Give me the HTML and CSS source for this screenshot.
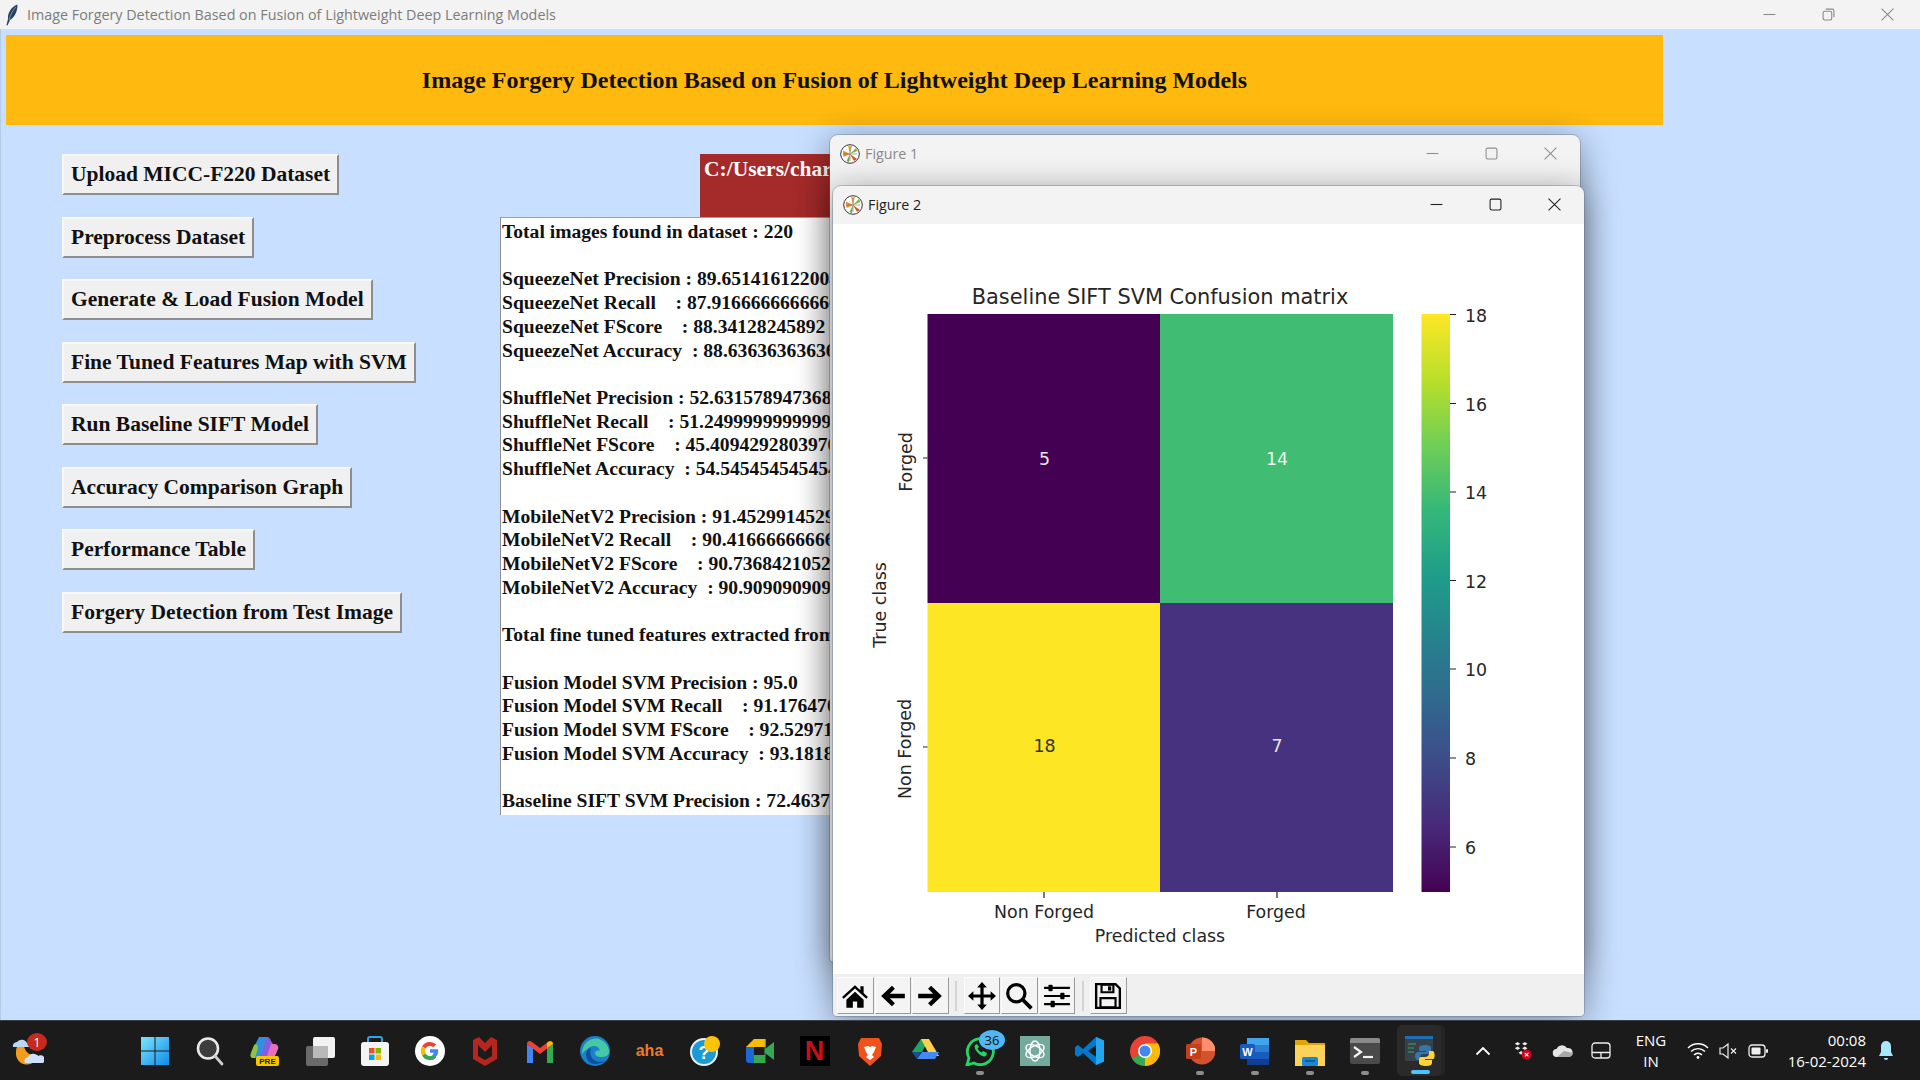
FILE: index.html
```html
<!DOCTYPE html>
<html lang="en">
<head>
  <meta charset="UTF-8" />
  <title>Image Forgery Detection Based on Fusion of Lightweight Deep Learning Models</title>
  <link rel="stylesheet" href="styles.css">
</head>
<body>

  <svg class="defs" width="0" height="0">
    <symbol id="ic-min" viewBox="0 0 12 12"><path d="M0.5 6h11" fill="none" stroke="currentColor"/></symbol>
    <symbol id="ic-max" viewBox="0 0 12 12"><rect x="1" y="1" width="10" height="10" rx="1.5" fill="none" stroke="currentColor"/></symbol>
    <symbol id="ic-restore" viewBox="0 0 12 12"><rect x="1" y="3" width="8" height="8" rx="1.5" fill="none" stroke="currentColor"/><path d="M3.5 1h6a1.5 1.5 0 0 1 1.5 1.5v6" fill="none" stroke="currentColor"/></symbol>
    <symbol id="ic-close" viewBox="0 0 12 12"><path d="M0.5 0.5l11 11M11.5 0.5l-11 11" fill="none" stroke="currentColor"/></symbol>
    <symbol id="ic-mpl" viewBox="0 0 20 20">
      <circle cx="10" cy="10" r="9.3" fill="#fff" stroke="#333" stroke-width="1"/>
      <path d="M10 10L3 6.5 3.5 13z" fill="#f08a24"/>
      <path d="M10 10L8 2 12 2z" fill="#e8b24a"/>
      <path d="M10 10L17 15 14 17z" fill="#d9541e"/>
      <path d="M10 10L16 4 17.5 7z" fill="#7fb54a"/>
      <path d="M10 10L9 18 6.5 17z" fill="#6aa84f"/>
      <path d="M3 10h14M10 3v14" stroke="#555" stroke-width=".5"/>
    </symbol>
  </svg>

  <div class="titlebar">
    <svg class="feather" width="14" height="22" viewBox="0 0 14 22"><path d="M12.5 0.5C6 3 2.5 9 3 15l-1.5 6 1 .5L5 16c5-3 7.500-9 7.500-15.500z" fill="#27405f"/><path d="M11 3C8 6 5.500 10 4 16" stroke="#9db4cc" stroke-width=".7" fill="none"/></svg>
    <span class="titlebar-text">Image Forgery Detection Based on Fusion of Lightweight Deep Learning Models</span>
    <div class="win-ctrls main-ctrls">
      <svg><use href="#ic-min"/></svg>
      <svg><use href="#ic-restore"/></svg>
      <svg><use href="#ic-close"/></svg>
    </div>
  </div>

  <div class="desktop">
    <div class="banner">Image Forgery Detection Based on Fusion of Lightweight Deep Learning Models</div>

    <div class="main">
      <div class="buttons">
        <button class="tk-btn">Upload MICC-F220 Dataset</button>
        <button class="tk-btn">Preprocess Dataset</button>
        <button class="tk-btn">Generate &amp; Load Fusion Model</button>
        <button class="tk-btn">Fine Tuned Features Map with SVM</button>
        <button class="tk-btn">Run Baseline SIFT Model</button>
        <button class="tk-btn">Accuracy Comparison Graph</button>
        <button class="tk-btn">Performance Table</button>
        <button class="tk-btn">Forgery Detection from Test Image</button>
      </div>
      <div class="output">
        <div class="path-label">C:/Users/charan</div>
<pre class="result-text">Total images found in dataset : 220

SqueezeNet Precision : 89.65141612200436
SqueezeNet Recall    : 87.91666666666667
SqueezeNet FScore    : 88.34128245892
SqueezeNet Accuracy  : 88.63636363636364

ShuffleNet Precision : 52.63157894736842
ShuffleNet Recall    : 51.24999999999999
ShuffleNet FScore    : 45.40942928039702
ShuffleNet Accuracy  : 54.54545454545454

MobileNetV2 Precision : 91.45299145299145
MobileNetV2 Recall    : 90.41666666666667
MobileNetV2 FScore    : 90.73684210526315
MobileNetV2 Accuracy  : 90.9090909090909

Total fine tuned features extracted from each model

Fusion Model SVM Precision : 95.0
Fusion Model SVM Recall    : 91.17647058823529
Fusion Model SVM FScore    : 92.52971137521221
Fusion Model SVM Accuracy  : 93.18181818181817

Baseline SIFT SVM Precision : 72.46376811594203</pre>
      </div>
    </div>

    <!-- matplotlib windows -->
    <div class="figure figure-back">
      <div class="fig-title inactive">
        <svg class="fig-logo"><use href="#ic-mpl"/></svg>
        <span>Figure 1</span>
        <div class="win-ctrls">
          <svg><use href="#ic-min"/></svg>
          <svg><use href="#ic-max"/></svg>
          <svg><use href="#ic-close"/></svg>
        </div>
      </div>
    </div>

    <div class="figure figure-front">
      <div class="fig-title">
        <svg class="fig-logo"><use href="#ic-mpl"/></svg>
        <span>Figure 2</span>
        <div class="win-ctrls">
          <svg><use href="#ic-min"/></svg>
          <svg><use href="#ic-max"/></svg>
          <svg><use href="#ic-close"/></svg>
        </div>
      </div>

      <svg class="chart" viewBox="833 224 751 750" width="751" height="750">
        <defs>
          <linearGradient id="viridis" x1="0" y1="1" x2="0" y2="0">
            <stop offset="0" stop-color="#440154"/>
            <stop offset=".11" stop-color="#482878"/>
            <stop offset=".22" stop-color="#3e4989"/>
            <stop offset=".33" stop-color="#31688e"/>
            <stop offset=".44" stop-color="#26828e"/>
            <stop offset=".55" stop-color="#1f9e89"/>
            <stop offset=".66" stop-color="#35b779"/>
            <stop offset=".77" stop-color="#6ece58"/>
            <stop offset=".88" stop-color="#b5de2b"/>
            <stop offset="1" stop-color="#fde725"/>
          </linearGradient>
        </defs>

        <text class="c-title" x="1160" y="304" text-anchor="middle">Baseline SIFT SVM Confusion matrix</text>

        <rect x="927.500" y="314" width="232.500" height="289" fill="#440154"/>
        <rect x="1160" y="314" width="233" height="289" fill="#40bd72"/>
        <rect x="927.500" y="603" width="232.500" height="289" fill="#fde725"/>
        <rect x="1160" y="603" width="233" height="289" fill="#46327e"/>

        <text class="c-ann" x="1044.500" y="464.500" text-anchor="middle" fill="#e6e6e6">5</text>
        <text class="c-ann" x="1277" y="464.500" text-anchor="middle" fill="#f0f0f0">14</text>
        <text class="c-ann" x="1044.500" y="752" text-anchor="middle" fill="#333">18</text>
        <text class="c-ann" x="1277" y="752" text-anchor="middle" fill="#e6e6e6">7</text>

        <path d="M923 458h4.500M923 747h4.500M1044 892v6M1277 892v6" stroke="#222" stroke-width="1.200"/>

        <text class="c-label" transform="translate(912 462) rotate(-90)" text-anchor="middle">Forged</text>
        <text class="c-label" transform="translate(911 749) rotate(-90)" text-anchor="middle">Non Forged</text>
        <text class="c-label" transform="translate(886 605) rotate(-90)" text-anchor="middle">True class</text>

        <text class="c-label" x="1044" y="918" text-anchor="middle">Non Forged</text>
        <text class="c-label" x="1276" y="918" text-anchor="middle">Forged</text>
        <text class="c-label" x="1160" y="942" text-anchor="middle">Predicted class</text>

        <rect x="1421.500" y="314" width="28.500" height="578" fill="url(#viridis)"/>
        <path d="M1450 314.500h6M1450 403.500h6M1450 492h6M1450 580.500h6M1450 669h6M1450 758h6M1450 847h6" stroke="#222" stroke-width="1.200"/>
        <text class="c-label" x="1465" y="321.500">18</text>
        <text class="c-label" x="1465" y="410.500">16</text>
        <text class="c-label" x="1465" y="499">14</text>
        <text class="c-label" x="1465" y="588">12</text>
        <text class="c-label" x="1465" y="676">10</text>
        <text class="c-label" x="1465" y="765">8</text>
        <text class="c-label" x="1465" y="854">6</text>
      </svg>

      <div class="toolbar">
        <button class="tool"><svg viewBox="0 0 26 26"><path d="M13 3L1 14l1.500 1.500L13 6l10.500 9.500L25 14l-4-3.700V4h-3v3.600z"/><path d="M5 16.500L13 9l8 7.500V24h-6v-6h-4v6H5z"/></svg></button>
        <button class="tool"><svg viewBox="0 0 26 26"><path d="M12 3.500L2 13l10 9.500 2.800-2.800-4.700-4.700H24v-4H10.100l4.700-4.700z"/></svg></button>
        <button class="tool"><svg viewBox="0 0 26 26"><path d="M14 3.500L24 13l-10 9.500-2.800-2.800 4.700-4.700H2v-4h13.900l-4.700-4.700z"/></svg></button>
        <span class="tool-sep"></span>
        <button class="tool"><svg viewBox="0 0 26 26"><path d="M13 0l4.500 5H14.500v6.500H21V8.500l5 4.500-5 4.500v-3h-6.500V21h3L13 26l-4.500-5h3v-6.500H5v3L0 13l5-4.500v3h6.500V5h-3z"/></svg></button>
        <button class="tool"><svg viewBox="0 0 26 26"><circle cx="10.500" cy="10.500" r="8" fill="none" stroke="#000" stroke-width="3"/><path d="M16.500 16.500l8 8" stroke="#000" stroke-width="3.500" fill="none"/></svg></button>
        <button class="tool"><svg viewBox="0 0 26 26"><path d="M1 5.500h24M1 13h24M1 20.500h24" stroke="#000" stroke-width="2" fill="none"/><rect x="5" y="2.500" width="4" height="6" rx="1"/><rect x="16" y="10" width="4" height="6" rx="1"/><rect x="7" y="17.500" width="4" height="6" rx="1"/></svg></button>
        <span class="tool-sep"></span>
        <button class="tool"><svg viewBox="0 0 26 26"><path d="M2 2h18l4 4v18H2z" fill="none" stroke="#000" stroke-width="2.200"/><path d="M7 2.500h11v7H7zM6 15h14v8.500H6z" fill="none" stroke="#000" stroke-width="2"/><rect x="13" y="4" width="3" height="4"/></svg></button>
      </div>
    </div>
  </div>

  <div class="taskbar">
    <div class="weather">
      <svg width="32" height="30" viewBox="0 0 32 30">
        <path d="M12 10a11 11 0 0 0 14 9 11 11 0 0 1-22-3 8 8 0 0 1 1-5z" fill="#f29b1d"/>
        <path d="M1 11a4 4 0 0 1 4-5 6 6 0 0 1 10 1 3 3 0 0 1 2 4z" fill="#bcd6f5"/>
        <path d="M13 27a4 4 0 0 1 3-6 6 6 0 0 1 10-1 4 4 0 0 1 5 7z" fill="#cfe1f8"/>
      </svg>
      <span class="badge-red">1</span>
    </div>

    <div class="apps">
      <div class="app"><svg viewBox="0 0 30 30"><defs><linearGradient id="win" x1="0" y1="0" x2="1" y2="1"><stop offset="0" stop-color="#7fe3ff"/><stop offset="1" stop-color="#0d8ee8"/></linearGradient></defs><path fill="url(#win)" d="M1 1h13.500v13.500H1zM15.500 1H29v13.500H15.500zM1 15.500h13.500V29H1zM15.500 15.500H29V29H15.500z"/></svg></div>
      <div class="app"><svg viewBox="0 0 30 30"><circle cx="13" cy="12.500" r="10" fill="#3d3d3d" stroke="#e8e8e8" stroke-width="2.600"/><path d="M20 20l7 8" stroke="#cfcfcf" stroke-width="2.800" stroke-linecap="round"/></svg></div>
      <div class="app"><svg viewBox="0 0 30 30"><path d="M9 1h9l-7 21H3C1 22 0 20 1 17z" fill="#2f8fe0"/><path d="M3 22c-2 0-3-2-2-5l3-8c2-2 4 0 4 3l-3 10z" fill="#8fc43c"/><path d="M17 1c2 0 3 1 4 4l2 3-5 12H11z" fill="#8a5ae0"/><path d="M21 8h3c3 0 5 2 4 5l-3 7h-8z" fill="#e76fb9"/><rect x="6" y="20" width="23" height="10" rx="2" fill="#f7c600"/><text class="pre" x="17.500" y="28">PRE</text></svg></div>
      <div class="app"><svg viewBox="0 0 30 30"><rect x="1" y="10" width="22" height="20" rx="2" fill="#6a6a6a"/><rect x="8" y="1" width="22" height="21" rx="2" fill="#f2f2f2"/><path d="M8 10h15v12H8z" fill="#b9b9b9"/></svg></div>
      <div class="app"><svg viewBox="0 0 30 30"><path d="M8 7V3a2 2 0 0 1 2-2h10a2 2 0 0 1 2 2v4" fill="none" stroke="#2aa7e8" stroke-width="2"/><rect x="1" y="6" width="28" height="24" rx="3" fill="#f4f4f4"/><rect x="9" y="12" width="5.500" height="5.500" fill="#f25022"/><rect x="15.500" y="12" width="5.500" height="5.500" fill="#7fba00"/><rect x="9" y="18.500" width="5.500" height="5.500" fill="#00a4ef"/><rect x="15.500" y="18.500" width="5.500" height="5.500" fill="#ffb900"/></svg></div>
      <div class="app"><svg viewBox="0 0 30 30"><circle cx="15" cy="15" r="15" fill="#fff"/><path d="M8.800 11.500a7 7 0 0 1 11-1.600" stroke="#ea4335" stroke-width="4" fill="none"/><path d="M8.800 18.500a7 7 0 0 1 0-7" stroke="#fbbc05" stroke-width="4" fill="none"/><path d="M20 20a7 7 0 0 1-11.200-1.500" stroke="#34a853" stroke-width="4" fill="none"/><path d="M23 13.200h-8v3.500h4a4 4 0 0 1-1.500 2l2.700 2.800A9 9 0 0 0 23 13.200z" fill="#4285f4"/></svg></div>
      <div class="app"><svg viewBox="0 0 30 30"><path d="M15 30L3 23V4l6-3 6 6 6-6 6 3v19zM8 9v11l7 4 7-4V9l-7 7z" fill="#b5261f" fill-rule="evenodd"/></svg></div>
      <div class="app"><svg viewBox="0 0 30 30"><path d="M2 27V8l6 4v15z" fill="#4285f4"/><path d="M22 27V12l6-4v19z" fill="#34a853"/><path d="M2 8c0-3 3-4 5-2l8 6 8-6c2-2 5-1 5 2l-13 10z" fill="#ea4335"/><path d="M23 6c2-1.500 5-.7 5 2l-6 4V7z" fill="#fbbc05"/></svg></div>
      <div class="app"><svg viewBox="0 0 30 30"><circle cx="15" cy="15" r="15" fill="#1a80c8"/><path d="M2 18C2 6 12 1 19 3c6 2 10 7 10 13 0 4-4 5-8 5-4 0-6-2-6-4s3-3 5-2c-1-5-6-6-10-4-3 2-6 4-8 7z" fill="#46c8a4"/><path d="M15 28c-6 0-9-5-9-10 0-3 2-5 5-6-1 2-1 5 0 8 2 5 8 7 14 5-2 2-6 3-10 3z" fill="#0f4fa0"/></svg></div>
      <div class="app"><span class="aha">aha</span></div>
      <div class="app"><svg viewBox="0 0 30 30"><circle cx="14" cy="16" r="13" fill="#1c9ad6" stroke="#e8f4fb" stroke-width="2"/><text class="qmark" x="14" y="23">?</text><circle cx="22" cy="8" r="8" fill="#fcc30b"/></svg></div>
      <div class="app"><svg viewBox="0 0 30 30"><path d="M9 3h11v8H9v0H1z" fill="#fbbc04"/><path d="M1 11h8v8H1z" fill="#1e67d6"/><path d="M1 19h8v8H4a3 3 0 0 1-3-3z" fill="#1e67d6"/><path d="M9 19h11v8H9z" fill="#34a853"/><path d="M20 13l9-7v18l-9-7z" fill="#34a853"/><path d="M20 3v24" stroke="#34a853"/><path d="M20 3v8" stroke="#fbbc04"/></svg></div>
      <div class="app"><div class="netflix">N</div></div>
      <div class="app"><svg viewBox="0 0 30 30"><path d="M6 2h18l3 6-1 12-11 10-11-10L3 8z" fill="#f1511b"/><path d="M9 11l4-1 2 1 2-1 4 1-2 5-2 3 2 2-4 3-4-3 2-2-2-3z" fill="#fff"/></svg></div>
      <div class="app"><svg viewBox="0 0 30 30"><path d="M11 3h8L12 16H2z" fill="#1fa463"/><path d="M19 3l10 17H20L11 3z" fill="#ffd04b"/><path d="M12 16h17l-4 7H7z" fill="#4688f4"/><path d="M2 16l5 7 4-7z" fill="#1a73e8" opacity=".6"/></svg></div>
      <div class="app"><svg viewBox="0 0 30 30"><path d="M2 29l2-7a13 13 0 1 1 5 5z" fill="none" stroke="#25d366" stroke-width="2.800"/><path d="M10 9c-1 2 0 5 3 8s6 4 8 3l1-3-4-2-1.500 1.500c-2-1-3-2-4-4L14 11l-2-3z" fill="#25d366"/></svg><span class="badge-blue">36</span></div>
      <div class="app"><svg viewBox="0 0 30 30"><rect width="30" height="30" fill="#74aa9c"/><g fill="none" stroke="#fff" stroke-width="1.400"><ellipse cx="15" cy="15" rx="10" ry="5" transform="rotate(30 15 15)"/><ellipse cx="15" cy="15" rx="10" ry="5" transform="rotate(90 15 15)"/><ellipse cx="15" cy="15" rx="10" ry="5" transform="rotate(150 15 15)"/></g></svg></div>
      <div class="app"><svg viewBox="0 0 30 30"><path d="M21 1l8 3.500v21L21 29 8 17l-5 4-3-2v-8l3-2 5 4z" fill="#0078cc"/><path d="M21 1l8 3.500v21L21 29z" fill="#24a5f0"/><path d="M21 9l-8 6 8 6z" fill="#1b1b1b"/></svg></div>
      <div class="app"><svg viewBox="0 0 30 30"><circle cx="15" cy="15" r="15" fill="#ea4335"/><path d="M15 15L2 22.500A15 15 0 0 0 15 30z" fill="#34a853"/><path d="M15 15l13 7.500A15 15 0 0 0 28 7.500H15z" fill="#fbbc05"/><path d="M15 15L15 30a15 15 0 0 0 13-7.500z" fill="#fbbc05"/><circle cx="15" cy="15" r="7" fill="#fff"/><circle cx="15" cy="15" r="5.500" fill="#4285f4"/></svg></div>
      <div class="app"><svg viewBox="0 0 30 30"><circle cx="17" cy="15" r="13.500" fill="#d35230"/><path d="M17 1.500A13.500 13.500 0 0 1 30.500 15H17z" fill="#ff8f6b"/><rect x="1" y="8" width="15" height="15" rx="1.500" fill="#c43e1c"/><text class="tile" x="8.500" y="20">P</text></svg></div>
      <div class="app"><svg viewBox="0 0 30 30"><path d="M7 2h22v7H7z" fill="#41a5ee"/><path d="M7 9h22v7H7z" fill="#2b7cd3"/><path d="M7 16h22v7H7z" fill="#185abd"/><path d="M7 23h22v6H7z" fill="#103f91"/><rect x="0" y="8" width="15" height="15" rx="1.500" fill="#185abd"/><text class="tile" x="7.500" y="20">W</text></svg></div>
      <div class="app"><svg viewBox="0 0 30 30"><path d="M0 4h11l3 3h16v23H0z" fill="#e0a500"/><path d="M0 9h30v21H0z" fill="#fbd35a"/><rect x="7" y="21" width="16" height="9" rx="1.500" fill="#1a86d8"/><path d="M10 25h10" stroke="#0d4f8a" stroke-width="1.500"/></svg></div>
      <div class="app"><svg viewBox="0 0 30 30"><rect y="2" width="30" height="26" rx="2" fill="#4a4a4a"/><path d="M0 4a2 2 0 0 1 2-2h26a2 2 0 0 1 2 2v3H0z" fill="#8a8a8a"/><path d="M4 11l7 5-7 5" fill="none" stroke="#f2f2f2" stroke-width="2.200"/><path d="M13 21h10" stroke="#f2f2f2" stroke-width="2.200"/></svg></div>
      <div class="app app-active"><svg viewBox="0 0 30 30"><rect y="0" width="28" height="25" fill="#37414a"/><path d="M0 0h28v3H0z" fill="#1f6fb5"/><path d="M3 8h8M3 12h6M3 16h6" stroke="#3fa35b" stroke-width="1.200"/><path d="M20 9c-4 0-6 1-6 3v3h7v1h-8c-2 0-3 2-3 4s1 4 3 4h2v-3c0-2 2-3 4-3h5c2 0 2-2 2-3v-3c0-2-2-3-6-3z" fill="#3776ab"/><path d="M21 30c4 0 6-1 6-3v-3h-7v-1h8c2 0 2-5 1-7-.5-1-1-1-3-1h-2v3c0 2-2 3-4 3h-4c-2 0-2 2-2 3v3c0 2 3 3 7 3z" fill="#ffd43b"/></svg></div>
    </div>

    <div class="tray">
      <svg class="tray-chev" width="16" height="10" viewBox="0 0 16 10"><path d="M1.500 8.500L8 2l6.500 6.500" fill="none" stroke="#fff" stroke-width="1.800"/></svg>
      <svg class="tray-ic tray-drop" width="20" height="20" viewBox="0 0 20 22"><path d="M1 3l3-2 3 2-3 2zM9 3l3-2 3 2-3 2zM1 8l3-2 3 2-3 2zM9 8l3-2 3 2-3 2zM5 13l3-2 3 2-3 2z" fill="#e8e8e8"/><circle cx="14" cy="15" r="5.500" fill="#d0021b"/><path d="M12 13l4 4M16 13l-4 4" stroke="#fff" stroke-width="1.200"/></svg>
      <svg class="tray-ic tray-cloud" width="22" height="14" viewBox="0 0 22 14"><path d="M5 13a4 4 0 0 1-.5-8A6 6 0 0 1 15 4a4.500 4.500 0 0 1 2 9z" fill="#e6e6e6"/><path d="M5 13h12a4.500 4.500 0 0 0 4-4l-9-2z" fill="#a8a8a8"/></svg>
      <svg class="tray-ic" width="20" height="17" viewBox="0 0 20 17"><rect x="1" y="1" width="18" height="15" rx="3" fill="none" stroke="#eee" stroke-width="1.300"/><path d="M1 10.500h18M10 10.500v5.500" stroke="#eee" stroke-width="1.300"/></svg>
      <div class="lang">ENG<br>IN</div>
      <svg class="tray-ic wifi" width="22" height="17" viewBox="0 0 22 17"><path d="M1 6a14 14 0 0 1 20 0M4 9.500a10 10 0 0 1 14 0M7 13a5.500 5.500 0 0 1 8 0" fill="none" stroke="#fff" stroke-width="1.400"/><circle cx="11" cy="15.500" r="1.400" fill="#fff"/></svg>
      <svg class="tray-ic vol" width="20" height="16" viewBox="0 0 20 16"><path d="M1 5h3l5-4v14l-5-4H1z" fill="none" stroke="#eee" stroke-width="1.200"/><path d="M12 5.500l5 5M17 5.500l-5 5" stroke="#eee" stroke-width="1.200"/></svg>
      <svg class="tray-ic batt" width="20" height="14" viewBox="0 0 20 14"><rect x="1" y="1" width="16" height="12" rx="3" fill="none" stroke="#eee" stroke-width="1.300"/><rect x="3.500" y="3.500" width="9" height="7" rx="1" fill="#eee"/><rect x="18" y="5" width="2" height="4" rx="1" fill="#eee"/></svg>
      <div class="clock">00:08<br>16-02-2024</div>
      <svg class="tray-ic bell" width="16" height="21" viewBox="0 0 16 21"><path d="M8 1a5 5 0 0 1 5 5v6l2 4H1l2-4V6a5 5 0 0 1 5-5z" fill="#a8e6fb"/><path d="M6 18h4a2 2 0 0 1-4 0z" fill="#a8e6fb"/></svg>
    </div>
  </div>

</body>
</html>
```

FILE: styles.css
```css
* {
  box-sizing: border-box;
}

body {
  margin: 0;
  width: 1920px;
  height: 1080px;
  overflow: hidden;
  display: flex;
  flex-direction: column;
  font-family: "Open Sans", "Noto Sans", sans-serif;
  background: #c8dfff;
}

.defs {
  position: absolute;
}

/* main window title */
.titlebar {
  height: 29px;
  flex-shrink: 0;
  display: flex;
  align-items: center;
  background: #f3f3f3;
  padding-left: 5px;
}

.feather {
  margin-right: 8px;
}

.titlebar-text {
  font-size: 14.330px;
  color: #7c7c7c;
}

.win-ctrls {
  margin-left: auto;
  display: flex;
  align-items: center;
  color: #222;
}

.win-ctrls svg {
  width: 59px;
  height: 13px;
}

.main-ctrls {
  margin-right: 3px;
  color: #8a8a8a;
}

/* tk app area */
.desktop {
  flex: 1;
  position: relative;
  border-left: 1px solid #b6cbe6;
}

.banner {
  margin: 6px 257px 0 5px;
  height: 90px;
  display: flex;
  align-items: center;
  justify-content: center;
  background: #ffb90f;
  font-family: "Liberation Serif", serif;
  font-weight: 700;
  font-size: 24px;
  color: #111;
}

.main {
  display: flex;
}

.buttons {
  width: 499px;
  padding: 29px 0 0 61px;
  display: flex;
  flex-direction: column;
  align-items: flex-start;
  gap: 21.500px;
}

.tk-btn {
  height: 41px;
  padding: 0 7px;
  background: #f0f0f0;
  border: 2px solid;
  border-color: #f8f8f8 #8e8e8e #8e8e8e #f8f8f8;
  font-family: "Liberation Serif", serif;
  font-weight: 700;
  font-size: 21.500px;
  color: #111;
  white-space: nowrap;
}

.output {
  width: 331px;
  padding-top: 29px;
}

.path-label {
  margin-left: 200px;
  height: 63px;
  padding: 3px 4px;
  background: #a52a2a;
  color: #fff;
  font-family: "Liberation Serif", serif;
  font-weight: 700;
  font-size: 21.500px;
  white-space: nowrap;
  overflow: hidden;
}

.result-text {
  margin: 0;
  height: 598px;
  padding: 2px 0 0 1px;
  background: #fff;
  border-left: 1px solid #8f8f8f;
  border-top: 1px solid #a0a0a0;
  overflow: hidden;
  font-family: "Liberation Serif", serif;
  font-weight: 700;
  font-size: 19.600px;
  line-height: 23.720px;
  color: #111;
}

/* matplotlib figures */
.figure {
  position: absolute;
  background: #fff;
  border-radius: 8px 8px 4px 4px;
  box-shadow: 0 6px 34px rgba(0, 0, 0, 0.4);
  outline: 1px solid rgba(90, 100, 120, 0.35);
  display: flex;
  flex-direction: column;
}

.figure-back {
  left: 829px;
  top: 106px;
  width: 750px;
  height: 827px;
  background: #f2f2f2;
}

.figure-front {
  left: 832px;
  top: 157px;
  width: 751px;
  height: 830px;
}

.fig-title {
  height: 38px;
  flex-shrink: 0;
  display: flex;
  align-items: center;
  padding: 0 0 1px 10px;
  background: #f3f3f3;
  border-radius: 8px 8px 0 0;
  font-size: 14.300px;
  color: #222;
}

.fig-title.inactive {
  color: #8a8a8a;
}

.fig-title.inactive .win-ctrls {
  color: #8f8f8f;
}

.fig-logo {
  width: 20px;
  height: 20px;
  margin-right: 5px;
}

.chart {
  display: block;
  flex-shrink: 0;
}

.chart text {
  font-family: "DejaVu Sans", sans-serif;
}

.chart .c-title {
  font-size: 20.900px;
  fill: #262626;
}

.chart .c-label {
  font-size: 17.400px;
  fill: #262626;
}

.chart .c-ann {
  font-size: 17.400px;
}

.toolbar {
  flex: 1;
  display: flex;
  align-items: center;
  gap: 1px;
  padding: 1px 0 0 4px;
  background: #f0f0f0;
  border-radius: 0 0 4px 4px;
}

.tool {
  width: 36.500px;
  height: 37px;
  padding: 0;
  display: flex;
  align-items: center;
  justify-content: center;
  background: #f4f4f4;
  border: 1.500px solid;
  border-color: #fbfbfb #9a9a9a #9a9a9a #fbfbfb;
}

.tool svg {
  width: 28px;
  height: 28px;
  flex-shrink: 0;
}

.tool-sep {
  width: 2px;
  height: 30px;
  margin: 0 5.500px;
  background: #d4d4d4;
}

/* windows taskbar */
.taskbar {
  height: 60px;
  flex-shrink: 0;
  display: flex;
  align-items: center;
  position: relative;
  background: #1b1b1b;
  border-top: 1px solid #3e3f44;
}

.weather {
  width: 127px;
  padding-left: 12px;
  position: relative;
  display: flex;
  align-items: center;
}

.badge-red {
  position: absolute;
  left: 27px;
  top: -3px;
  width: 20px;
  height: 18px;
  border-radius: 50%;
  background: #c42b1c;
  color: #fff;
  font-size: 13px;
  line-height: 18px;
  text-align: center;
}

.apps {
  display: flex;
}

.app {
  position: relative;
  width: 55px;
  height: 59px;
  display: flex;
  align-items: center;
  justify-content: center;
}

.app svg {
  position: relative;
  width: 30px;
  height: 30px;
}

/* the little pill under running apps */
.app:nth-child(16)::after,
.app:nth-child(20)::after,
.app:nth-child(21)::after,
.app:nth-child(22)::after,
.app:nth-child(23)::after {
  content: "";
  position: absolute;
  left: 24px;
  bottom: 5px;
  width: 8px;
  height: 4px;
  border-radius: 2px;
  background: #8d8d8d;
}

/* python tile, the running window behind it shows as a second edge */
.app-active::before {
  content: "";
  position: absolute;
  left: 5px;
  top: 4px;
  width: 44px;
  height: 51px;
  background: #2a2a2a;
  border-radius: 5px;
  box-shadow: 4px 0 0 #242424;
}

.app-active::after {
  content: "";
  position: absolute;
  left: 19px;
  bottom: 6px;
  width: 19px;
  height: 4px;
  border-radius: 2px;
  background: #4cc2ff;
}

.badge-blue {
  position: absolute;
  left: 27px;
  top: 9px;
  width: 26px;
  height: 20px;
  border-radius: 50%;
  background: #4db8f5;
  color: #111;
  font-size: 13px;
  line-height: 20px;
  text-align: center;
}

.aha {
  font-family: "Liberation Sans", sans-serif;
  font-weight: 700;
  font-size: 16px;
  color: #ee7a2b;
}

.netflix {
  width: 30px;
  height: 30px;
  background: #000;
  color: #c8101a;
  font-family: "Liberation Sans", sans-serif;
  font-weight: 700;
  font-size: 27px;
  line-height: 30px;
  text-align: center;
}

.app text {
  font-family: "Liberation Sans", sans-serif;
  font-weight: 700;
  text-anchor: middle;
}

.app .pre {
  font-size: 8px;
  fill: #222;
}

.app .qmark {
  font-size: 18px;
  fill: #fff;
}

.app .tile {
  font-size: 11px;
  fill: #fff;
}

.tray {
  margin-left: auto;
  padding-right: 26px;
  display: flex;
  align-items: center;
  color: #fff;
  font-size: 15px;
  line-height: 21px;
}

.tray-chev {
  margin-right: 22px;
}

.tray-ic {
  margin-right: 20px;
}

.tray-drop {
  margin-right: 19px;
}

.tray-cloud {
  margin-right: 17px;
}

.lang {
  width: 40px;
  margin-right: 16px;
  text-align: center;
}

.wifi {
  margin-right: 10px;
}

.vol {
  margin-right: 9px;
}

.batt {
  margin-right: 8px;
}

.clock {
  width: 90px;
  text-align: right;
  margin-right: 12px;
}

.bell {
  margin-right: 0;
}
```
